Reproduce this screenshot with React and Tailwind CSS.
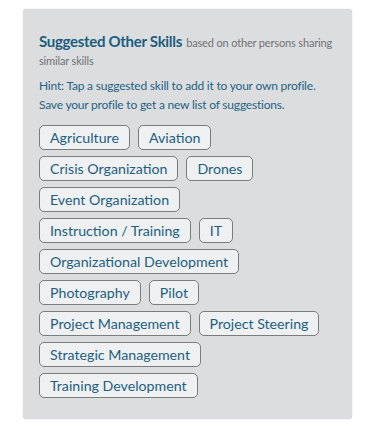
export default function App() {
  const skills = [
    ["Agriculture", "Aviation"],
    ["Crisis Organization", "Drones"],
    ["Event Organization"],
    ["Instruction / Training", "IT"],
    ["Organizational Development"],
    ["Photography", "Pilot"],
    ["Project Management", "Project Steering"],
    ["Strategic Management"],
    ["Training Development"],
  ];
  return (
    <div className="w-[375px] h-[429px] bg-white pt-[9px] pl-[23px]" style={{ fontFamily: "Lato, 'Open Sans', sans-serif" }}>
      <div className="w-[329px] h-[410px] bg-[#dcdddf] rounded-[4px] shadow-[0_0_1px_rgba(0,0,0,0.35)] pt-[24px] px-[16px]">
        <div className="leading-[16px]">
          <span className="text-[15px] font-bold tracking-[-0.3px] text-[#1b5e80]">Suggested Other Skills</span>{" "}
          <span className="text-[11px] tracking-[-0.15px] text-[#6f7275]">based on other persons sharing similar skills</span>
        </div>
        <div className="mt-[7px] text-[12px] tracking-[-0.2px] leading-[19px] text-[#1f6384]">
          <p>Hint: Tap a suggested skill to add it to your own profile.</p>
          <p>Save your profile to get a new list of suggestions.</p>
        </div>
        <div className="mt-[11px] flex flex-col gap-[6px]">
          {skills.map((row, i) => (
            <div key={i} className="flex gap-[8px]">
              {row.map((s) => (
                <span key={s} className="h-[25px] px-[10px] flex items-center rounded-[5px] border border-[#7a7c7e] bg-[#eef0f1] text-[14.2px] text-[#1d5f80]">
                  {s}
                </span>
              ))}
            </div>
          ))}
        </div>
      </div>
    </div>
  );
}
